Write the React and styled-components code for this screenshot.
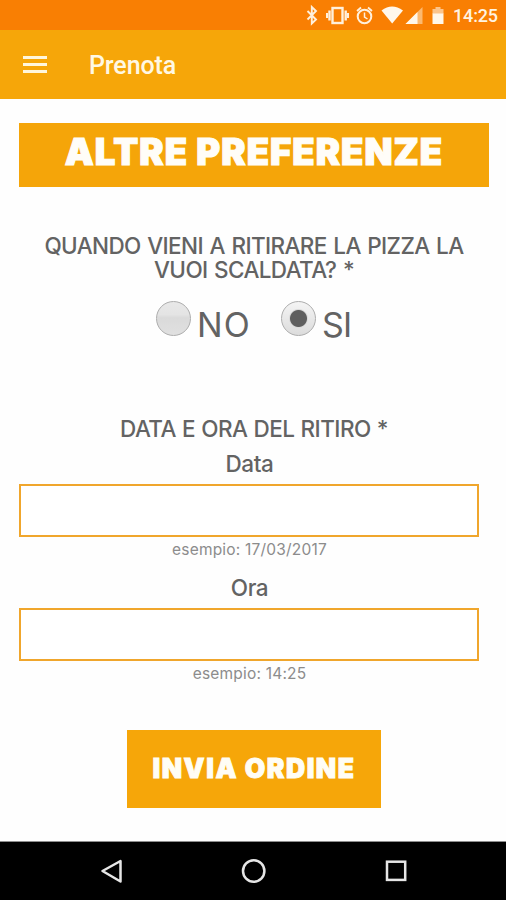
import React, { useState } from 'react';
import styled, { createGlobalStyle } from 'styled-components';

const GlobalStyle = createGlobalStyle`
  * { box-sizing: border-box; }
  body { margin: 0; background: #fff; }
`;

const Screen = styled.div`
  width: 506px;
  height: 900px;
  display: flex;
  flex-direction: column;
  overflow: hidden;
  background: #fefefe;
  color: #636363;
  font-family: Inter, 'Open Sans', sans-serif;
`;

const StatusBar = styled.header`
  height: 30px;
  flex: none;
  background: #f97f03;
  display: flex;
  justify-content: flex-end;
  padding-right: 9px;
`;

const StatusIcons = styled.svg`
  display: block;
  width: 150px;
  height: 30px;
`;

const Clock = styled.span`
  width: 44px;
  margin-left: 3px;
  font: 500 18px/32px Roboto, sans-serif;
  letter-spacing: -0.15px;
  color: #fff3e2;
  white-space: nowrap;
`;

const AppBar = styled.nav`
  height: 69px;
  flex: none;
  background: #f6a609;
  display: flex;
  align-items: center;
  padding-left: 23px;
`;

const MenuButton = styled.button`
  width: 24px;
  height: 17px;
  padding: 0;
  border: 0;
  background: none;
  display: flex;
  flex-direction: column;
  justify-content: space-between;
`;

const MenuLine = styled.span`
  height: 3px;
  width: 24px;
  background: #fff6dc;
`;

const AppTitle = styled.h1`
  margin: 3px 0 0 42px;
  font: 500 25px/30px Roboto, sans-serif;
  letter-spacing: -0.1px;
  color: #fff8e4;
`;

const Content = styled.main`
  height: 742px;
  flex: none;
  padding: 24px 17px 0 19px;
  display: flex;
  flex-direction: column;
`;

const Banner = styled.h2`
  margin: 0;
  height: 64px;
  width: 470px;
  background: #f5a509;
  color: #fffdf8;
  text-align: center;
  font-size: 36.5px;
  font-weight: 900;
  line-height: 58px;
  letter-spacing: 1px;
  -webkit-text-stroke: 1.1px #fffdf8;
  white-space: nowrap;
`;

const Question = styled.h3`
  margin: 47px 0 0;
  width: 470px;
  font-size: 22.5px;
  font-weight: 500;
  line-height: 24px;
  text-align: center;
  letter-spacing: -0.62px;
  word-spacing: 1.2px;
`;

const Choices = styled.div`
  margin-top: 18px;
  height: 42px;
  padding-left: 137px;
  display: flex;
`;

const Choice = styled.label`
  display: flex;
  width: 125px;
  font-size: 34px;
  font-weight: 400;
  line-height: 50px;
  letter-spacing: ${(p) => p.$tracking}px;
`;

const HiddenRadio = styled.input`
  appearance: none;
  margin: 0;
  width: 0;
  height: 0;
`;

const Dial = styled.span`
  width: 35px;
  height: 35px;
  margin: 1px 6px 0 0;
  flex: none;
  border-radius: 50%;
  border: 1.5px solid #adadad;
  background: ${(p) => (p.$on
    ? 'radial-gradient(circle, #5f5f5f 0 8px, #dadada 9px, transparent 10px), linear-gradient(#f4f4f4, #dcdcdc)'
    : 'linear-gradient(#e8e8e8 0, #e4e4e4 38%, #dadada 48%, #e0e0e0)')};
`;

const Form = styled.form`
  margin-top: 73px;
  width: 460px;
  display: flex;
  flex-direction: column;
  text-align: center;
`;

const Legend = styled.h3`
  margin: 0;
  width: 470px;
  font-size: 22.5px;
  font-weight: 500;
  line-height: 27px;
  letter-spacing: -0.55px;
  word-spacing: 0.7px;
  white-space: nowrap;
`;

const FieldLabel = styled.label`
  height: 28px;
  margin-top: ${(p) => p.$gap}px;
  padding-left: 1px;
  font-size: 22.5px;
  font-weight: 500;
  line-height: 28px;
  letter-spacing: -0.4px;
`;

const Field = styled.input`
  display: block;
  width: 460px;
  height: 53px;
  margin-top: 6px;
  padding: 0 12px;
  border: 2px solid #f0a62c;
  border-radius: 0;
  outline: none;
  background: #fff;
  font: 400 22px Inter, sans-serif;
`;

const Hint = styled.small`
  height: 20px;
  margin-top: 3px;
  padding-left: 1px;
  font-size: 15.5px;
  font-weight: 400;
  line-height: 20px;
  color: #8c8c8c;
  letter-spacing: 0.2px;
`;

const Submit = styled.button`
  width: 254px;
  height: 78px;
  margin: 46px 0 0 108px;
  padding: 0 0 3px;
  border: 0;
  background: #f6a609;
  color: #fffdf5;
  font: 900 26.5px/40px Inter, sans-serif;
  letter-spacing: 1.5px;
  -webkit-text-stroke: 0.9px #fffdf5;
  white-space: nowrap;
`;

const SystemNav = styled.footer`
  height: 59px;
  flex: none;
  border-top: 1px solid #8e8e8e;
  background: #000;
`;

const NavIcons = styled.svg`
  display: block;
  width: 506px;
  height: 58px;
`;

function StatusGlyphs() {
  return (
    <StatusIcons viewBox="300 0 150 30" fill="none" stroke="#fff0dc">
      <path d="M307.500 11l8.500 8.500-4.200 4V7l4.200 4-8.500 8.500" strokeWidth="1.900" />
      <rect x="332.500" y="8" width="10" height="15" strokeWidth="2.400" />
      <path d="M329.500 10.500v10M345.700 10.500v10" strokeWidth="2.400" />
      <path d="M327 13v5M348 13v5" strokeWidth="2" />
      <circle cx="364.500" cy="16.500" r="6.800" strokeWidth="2" />
      <path d="M364.500 12.500v4.500l3 2" strokeWidth="1.500" />
      <path d="M357 11l4-3.500M372 11l-4-3.500" strokeWidth="1.800" />
      <path d="M381.500 10.500Q392 2.500 403 10.500L392.200 23.500Z" fill="#fff7eb" stroke="none" />
      <path d="M422.500 7v17h-17z" fill="#fcb970" stroke="none" />
      <path d="M417.500 12v12h-12z" fill="#fff7eb" stroke="none" />
      <path d="M432.500 9h3V7h5v2h3v5h-11z" fill="#fcc48b" stroke="none" />
      <path d="M432.500 13.500h11v10.500h-11z" fill="#fff7eb" stroke="none" />
    </StatusIcons>
  );
}

const options = [
  { value: 'NO', tracking: 1.2 },
  { value: 'SI', tracking: -0.8 },
];

export default function App() {
  const [warm, setWarm] = useState('SI');
  return (
    <>
      <GlobalStyle />
      <Screen>
        <StatusBar>
          <StatusGlyphs />
          <Clock>14:25</Clock>
        </StatusBar>
        <AppBar>
          <MenuButton aria-label="Menu">
            <MenuLine />
            <MenuLine />
            <MenuLine />
          </MenuButton>
          <AppTitle>Prenota</AppTitle>
        </AppBar>
        <Content>
          <Banner>ALTRE PREFERENZE</Banner>
          <Question>QUANDO VIENI A RITIRARE LA PIZZA LA VUOI SCALDATA? *</Question>
          <Choices>
            {options.map((o) => (
              <Choice key={o.value} $tracking={o.tracking}>
                <HiddenRadio
                  type="radio"
                  name="warm"
                  checked={warm === o.value}
                  onChange={() => setWarm(o.value)}
                />
                <Dial $on={warm === o.value} />
                {o.value}
              </Choice>
            ))}
          </Choices>
          <Form onSubmit={(e) => e.preventDefault()}>
            <Legend>DATA E ORA DEL RITIRO *</Legend>
            <FieldLabel htmlFor="data" $gap={8}>Data</FieldLabel>
            <Field id="data" />
            <Hint>esempio: 17/03/2017</Hint>
            <FieldLabel htmlFor="ora" $gap={14}>Ora</FieldLabel>
            <Field id="ora" />
            <Hint>esempio: 14:25</Hint>
            <Submit>INVIA ORDINE</Submit>
          </Form>
        </Content>
        <SystemNav>
          <NavIcons viewBox="0 842 506 58" fill="none" stroke="#e6e6e6" strokeWidth="2.500">
            <path d="M102.500 871L120.500 861v20.500z" strokeLinejoin="round" />
            <circle cx="253.700" cy="871" r="10.700" />
            <rect x="387" y="861.700" width="18.200" height="18.200" />
          </NavIcons>
        </SystemNav>
      </Screen>
    </>
  );
}
